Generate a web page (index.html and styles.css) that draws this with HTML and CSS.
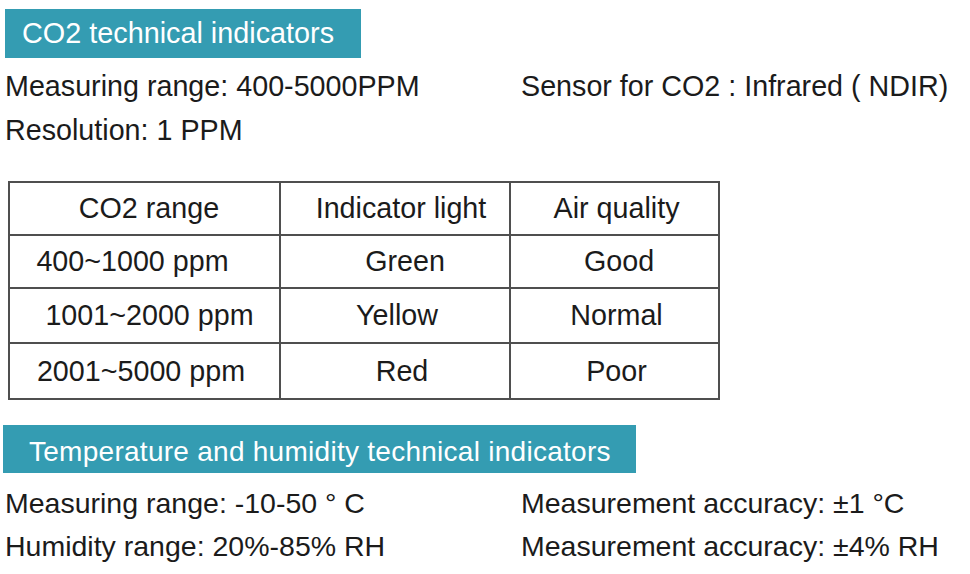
FILE: index.html
```html
<!DOCTYPE html>
<html lang="en">
<head>
<meta charset="utf-8">
<title>Technical indicators</title>
<link rel="stylesheet" href="styles.css">
</head>
<body>
<section class="section">
  <h2 class="banner banner-co2">CO2 technical indicators</h2>
  <div class="specs specs-co2">
    <div>Measuring range: 400-5000PPM</div>
    <div>Sensor for CO2 : Infrared ( NDIR)</div>
    <div>Resolution: 1 PPM</div>
    <div></div>
  </div>
  <table class="levels">
    <colgroup>
      <col class="c1">
      <col class="c2">
      <col class="c3">
    </colgroup>
    <tr class="r-head">
      <td class="sh-p4">CO2 range</td>
      <td class="sh-p6">Indicator light</td>
      <td class="sh-p2">Air quality</td>
    </tr>
    <tr class="r1">
      <td class="sh-m12">400~1000 ppm</td>
      <td class="sh-p10">Green</td>
      <td class="sh-p4">Good</td>
    </tr>
    <tr class="r2">
      <td class="sh-p5">1001~2000 ppm</td>
      <td class="sh-p2">Yellow</td>
      <td class="sh-p2">Normal</td>
    </tr>
    <tr class="r3">
      <td class="sh-m4">2001~5000 ppm</td>
      <td class="sh-p7">Red</td>
      <td class="sh-p2">Poor</td>
    </tr>
  </table>
</section>
<section class="section">
  <h2 class="banner banner-th">Temperature and humidity technical indicators</h2>
  <div class="specs specs-th">
    <div>Measuring range: -10-50 ° C</div>
    <div>Measurement accuracy: ±1 °C</div>
    <div>Humidity range: 20%-85% RH</div>
    <div>Measurement accuracy: ±4% RH</div>
  </div>
</section>
</body>
</html>
```
FILE: styles.css
```css
html, body {
  margin: 0;
  padding: 0;
  background: #ffffff;
}
body {
  font-family: "Liberation Sans", Arial, sans-serif;
  color: #1b1b1b;
  font-size: 28.7px;
  width: 970px;
  height: 574px;
  overflow: hidden;
}
.banner {
  margin: 0;
  font-weight: normal;
  background: #349cb2;
  color: #ffffff;
  box-sizing: border-box;
  white-space: nowrap;
}
.banner-co2 {
  margin: 9px 0 0 5px;
  width: 356px;
  height: 49px;
  line-height: 49px;
  padding-left: 17px;
  font-size: 28.8px;
}
.banner-th {
  margin: 25px 0 0 3px;
  width: 633px;
  height: 48px;
  line-height: 48px;
  padding: 3px 0 0 26px;
  font-size: 28px;
  letter-spacing: 0.27px;
}
.specs {
  display: grid;
  grid-template-columns: 516px auto;
  margin-left: 5px;
  white-space: nowrap;
}
.specs-co2 {
  margin-top: 6px;
  line-height: 44px;
}
.specs-th {
  margin-top: 9px;
  line-height: 43px;
  font-size: 28.5px;
}
.levels {
  margin: 29px 0 0 8px;
  border-collapse: collapse;
  table-layout: fixed;
  width: 710px;
  font-size: 28.7px;
}
.levels .c1 { width: 271px; }
.levels .c2 { width: 230px; }
.levels .c3 { width: 209px; }
.levels td {
  border: 2px solid #4f4f4f;
  padding: 0;
  text-align: center;
  white-space: nowrap;
  vertical-align: middle;
  overflow: visible;
}
.r-head { height: 53px; }
.r1 { height: 53px; }
.r2 { height: 55px; }
.r3 { height: 56px; }
.sh-m12 { padding-right: 24px !important; }
.sh-m4 { padding-right: 7px !important; }
.sh-p2 { padding-left: 4px !important; }
.sh-p4 { padding-left: 9px !important; }
.sh-p5 { padding-left: 10px !important; }
.sh-p6 { padding-left: 12px !important; }
.sh-p7 { padding-left: 14px !important; }
.sh-p10 { padding-left: 20px !important; }
```
